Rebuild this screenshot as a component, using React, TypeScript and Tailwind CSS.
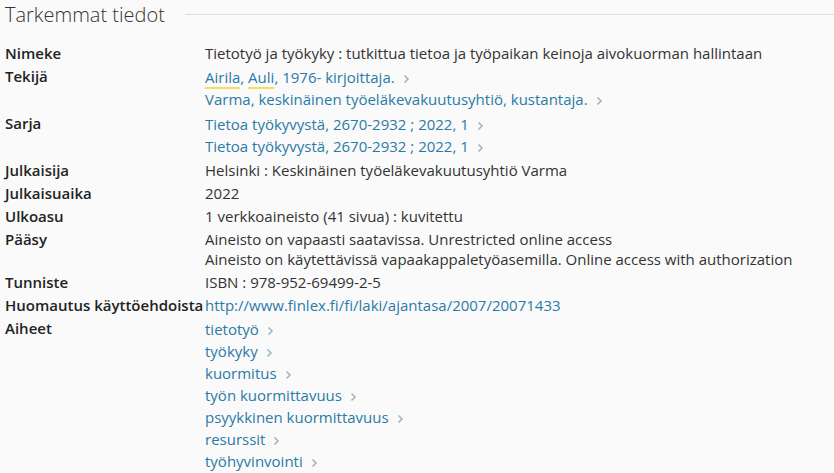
import React from "react";

const Chev = () => (
  <svg width="7" height="10" viewBox="0 0 7 10" className="inline-block ml-[8px] align-[-1px]">
    <path d="M1.5 1.5 L5 5 L1.5 8.5" fill="none" stroke="#9fb6c3" strokeWidth="1.6" />
  </svg>
);

const L = ({ children }: { children: React.ReactNode }) => (
  <div className="leading-[22px]">
    <span className="text-[#2a7ba7]">{children}</span>
    <Chev />
  </div>
);

const Row = ({ label, children }: { label: string; children: React.ReactNode }) => (
  <div className="flex pt-[2px] pb-[1px]">
    <div className="w-[200px] shrink-0 font-semibold text-[#222]">{label}</div>
    <div className="flex-1">{children}</div>
  </div>
);

export default function App() {
  return (
    <div className="min-h-[473px] bg-[#fafafa] text-[#333] text-[15px] leading-[20px] pl-[5px] overflow-hidden" style={{ fontFamily: '"Open Sans", sans-serif' }}>
      <div className="flex items-center h-[30px]">
        <h2 className="text-[20px] font-light leading-[30px] text-[#333] -mt-[1px]">Tarkemmat tiedot</h2>
        <div className="flex-1 ml-[20px] h-px bg-[#ddd] -mt-[2px]" />
      </div>
      <div className="mt-[11px]">
        <Row label="Nimeke">
          <div>Tietotyö ja työkyky : tutkittua tietoa ja työpaikan keinoja aivokuorman hallintaan</div>
        </Row>
        <Row label="Tekijä">
          <div className="leading-[22px]">
            <span className="text-[#2a7ba7]">
              <span className="border-b-2 border-[#f3df5f]">Airila</span>,{" "}
              <span className="border-b-2 border-[#f3df5f]">Auli</span>, 1976- kirjoittaja.
            </span>
            <Chev />
          </div>
          <L>Varma, keskinäinen työeläkevakuutusyhtiö, kustantaja.</L>
        </Row>
        <Row label="Sarja">
          <L>Tietoa työkyvystä, 2670-2932 ; 2022, 1</L>
          <L>Tietoa työkyvystä, 2670-2932 ; 2022, 1</L>
        </Row>
        <Row label="Julkaisija">
          <div>Helsinki : Keskinäinen työeläkevakuutusyhtiö Varma</div>
        </Row>
        <Row label="Julkaisuaika">
          <div>2022</div>
        </Row>
        <Row label="Ulkoasu">
          <div>1 verkkoaineisto (41 sivua) : kuvitettu</div>
        </Row>
        <Row label="Pääsy">
          <div>Aineisto on vapaasti saatavissa. Unrestricted online access</div>
          <div>Aineisto on käytettävissä vapaakappaletyöasemilla. Online access with authorization</div>
        </Row>
        <Row label="Tunniste">
          <div>ISBN : 978-952-69499-2-5</div>
        </Row>
        <Row label="Huomautus käyttöehdoista">
          <div className="text-[#2a7ba7]">http://www.finlex.fi/fi/laki/ajantasa/2007/20071433</div>
        </Row>
        <Row label="Aiheet">
          <L>tietotyö</L>
          <L>työkyky</L>
          <L>kuormitus</L>
          <L>työn kuormittavuus</L>
          <L>psyykkinen kuormittavuus</L>
          <L>resurssit</L>
          <L>työhyvinvointi</L>
        </Row>
      </div>
    </div>
  );
}
